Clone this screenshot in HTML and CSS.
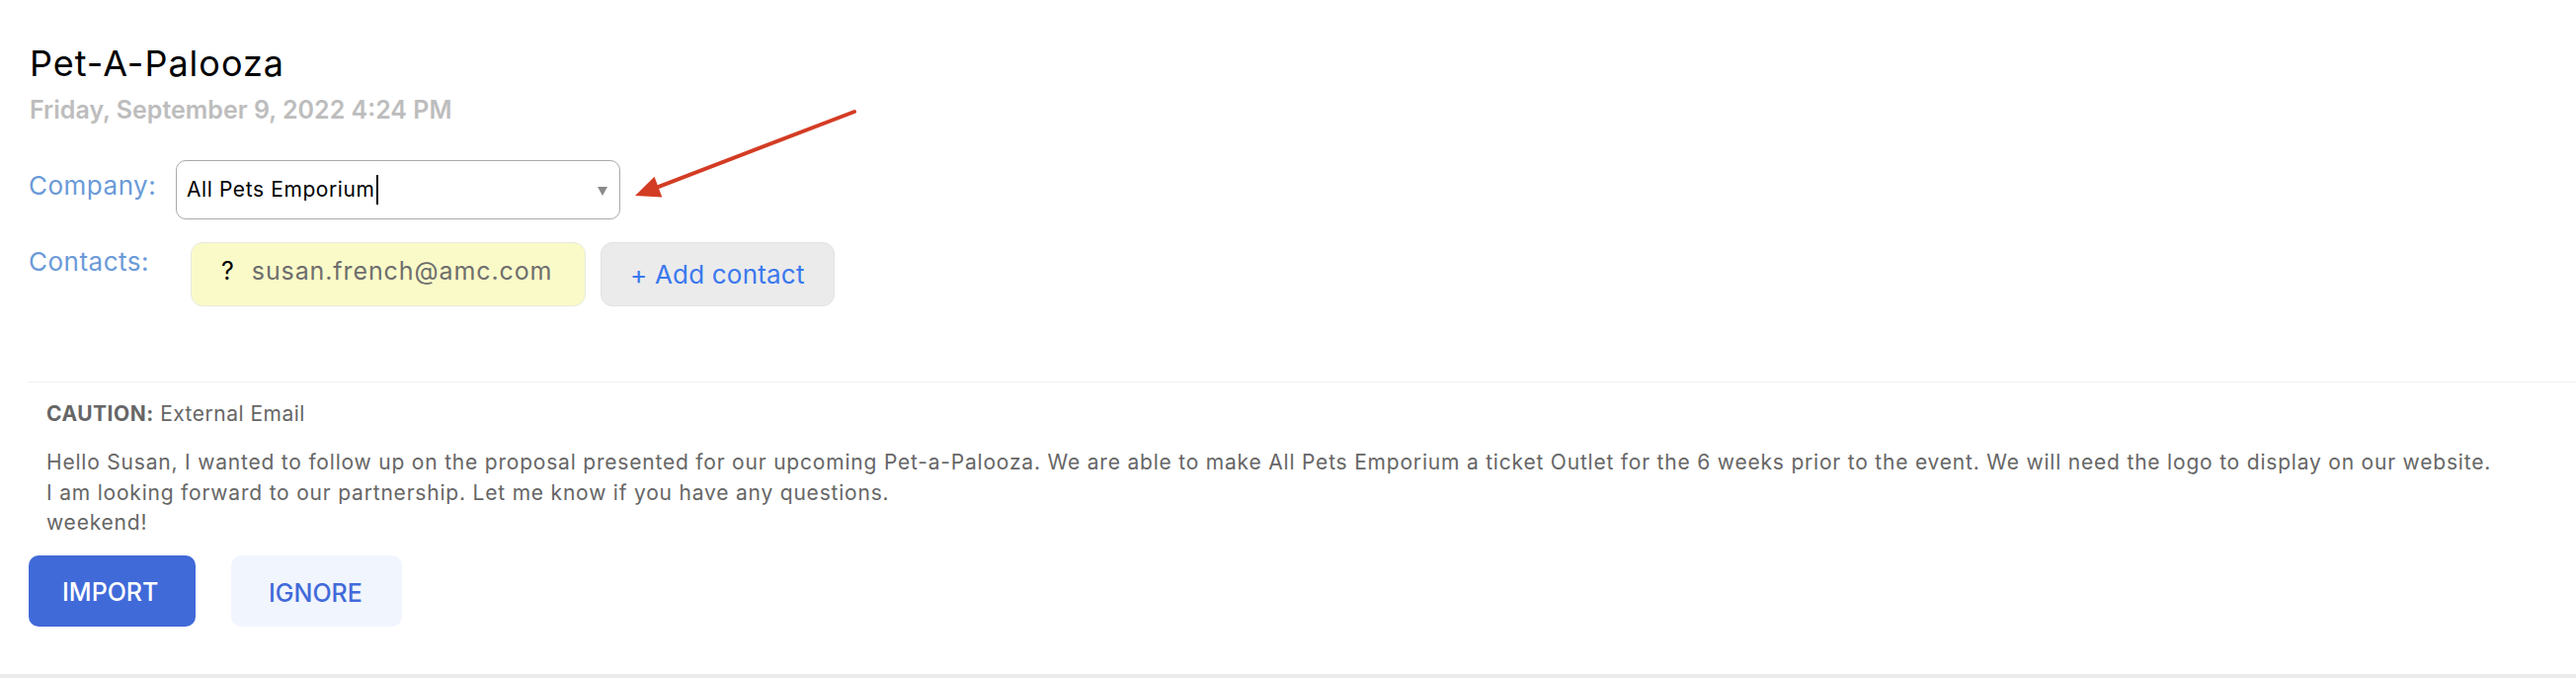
FILE: index.html
```html
<!DOCTYPE html>
<html lang="en">
<head>
<meta charset="utf-8">
<title>Pet-A-Palooza</title>
<link rel="stylesheet" href="styles.css">
</head>
<body>
<div class="screen">
  <main class="page">
    <header class="head">
      <h1 class="title">Pet-A-Palooza</h1>
      <div class="date">Friday, September 9, 2022 4:24 PM</div>
    </header>
    <section class="form">
      <div class="row row-company">
        <span class="label label-company">Company:</span>
        <div class="select">
          <span class="select-text">All Pets Emporium</span>
          <span class="caret"></span>
          <span class="chev"></span>
        </div>
        <svg class="pointer" width="240" height="100" viewBox="0 0 240 100" aria-hidden="true">
          <line x1="230" y1="8" x2="30" y2="84.6" stroke="#d33c24" stroke-width="4" stroke-linecap="round"/>
          <polygon points="8,93 27.5,73.8 35.3,94.4" fill="#d33c24"/>
        </svg>
      </div>
      <div class="row row-contacts">
        <span class="label label-contacts">Contacts:</span>
        <div class="chip">
          <span class="chip-q">?</span>
          <span class="chip-mail">susan.french@amc.com</span>
        </div>
        <button class="add" type="button">+ Add contact</button>
      </div>
    </section>
    <section class="mail">
      <div class="caution"><b>CAUTION:</b> External Email</div>
      <div class="body">Hello Susan, I wanted to follow up on the proposal presented for our upcoming Pet-a-Palooza. We are able to make All Pets Emporium a ticket Outlet for the 6 weeks prior to the event. We will need the logo to display on our website.<br>I am looking forward to our partnership. Let me know if you have any questions.<br>weekend!</div>
      <div class="actions">
        <button class="btn btn-import" type="button">IMPORT</button>
        <button class="btn btn-ignore" type="button">IGNORE</button>
      </div>
    </section>
  </main>
  <div class="bottom-bar"></div>
</div>
</body>
</html>
```
FILE: styles.css
```css
* { box-sizing: border-box; }
html, body { margin: 0; padding: 0; background: #ffffff; }
body { font-family: Inter, "Noto Sans", "Liberation Sans", sans-serif; }

.screen { display: flex; flex-direction: column; height: 686px; overflow: hidden; }
.page { flex: 1; padding-top: 42px; }
.bottom-bar { height: 4px; background: #ebebeb; }

.head { padding-left: 30px; }
.title { margin: 0; font-size: 36px; line-height: 44px; font-weight: 400; color: #000; letter-spacing: 1px; }
.date { margin-top: 10px; font-size: 25px; line-height: 30px; font-weight: 600; color: #bdbdbd; letter-spacing: 0; }

.form { margin-top: 36px; padding-left: 29px; display: flex; flex-direction: column; gap: 23px; }
.row { display: flex; align-items: flex-start; position: relative; }
.label { width: 149px; flex: none; font-size: 26px; line-height: 32px; color: #6a9ad8; letter-spacing: 0.5px; }
.label-company { padding-top: 10px; }
.label-contacts { padding-top: 4px; }

.select { width: 450px; height: 60px; border: 1.5px solid #a9a9a9; border-radius: 10px; display: flex; align-items: center; padding-left: 10px; padding-right: 12px; background: #fff; }
.select-text { font-size: 21px; line-height: 26px; color: #000; letter-spacing: 0.6px; }
.caret { width: 2px; height: 30px; background: #000; margin-left: 1px; }
.chev { margin-left: auto; width: 0; height: 0; border-left: 5px solid transparent; border-right: 5px solid transparent; border-top: 9px solid #8a8a8a; margin-top: 2px; }

.pointer { position: absolute; left: 606px; top: -57px; }

.chip { margin-left: 15px; width: 400px; height: 65px; background: #fafac8; border: 1.5px solid #e9e9e3; border-radius: 12px; padding: 13px 0 0 30px; display: flex; gap: 18px; font-size: 25px; line-height: 30px; }
.chip-q { color: #000; }
.chip-mail { color: #6e6e6e; letter-spacing: 0.9px; }

.add { margin-left: 15px; width: 237px; height: 65px; background: #ebebeb; border: 1.5px solid #e2e2e2; border-radius: 12px; padding: 0 0 0 29px; text-align: left; font-family: inherit; font-size: 26px; line-height: 32px; color: #3a78ee; letter-spacing: 0.2px; }

.mail { margin-top: 76px; margin-left: 28px; border-top: 1.5px solid #eeeeee; padding-top: 17px; }
.caution { padding-left: 19px; font-size: 21px; line-height: 30px; color: #666; letter-spacing: 0.5px; }
.caution b { font-weight: 700; }
.body { margin-top: 19px; padding-left: 19px; font-size: 21px; line-height: 30.5px; color: #666; white-space: nowrap; letter-spacing: 0.8px; }

.actions { margin-top: 17px; padding-left: 1px; display: flex; gap: 36px; }
.btn { height: 72px; border: none; border-radius: 10px; font-family: inherit; font-size: 25px; font-weight: 500; display: flex; align-items: center; padding-top: 3px; }
.btn-import { width: 169px; background: #416ad9; color: #fff; padding-left: 34px; }
.btn-ignore { width: 173px; background: #f1f5fe; color: #416ad9; padding-left: 38px; padding-top: 5px; }
```
